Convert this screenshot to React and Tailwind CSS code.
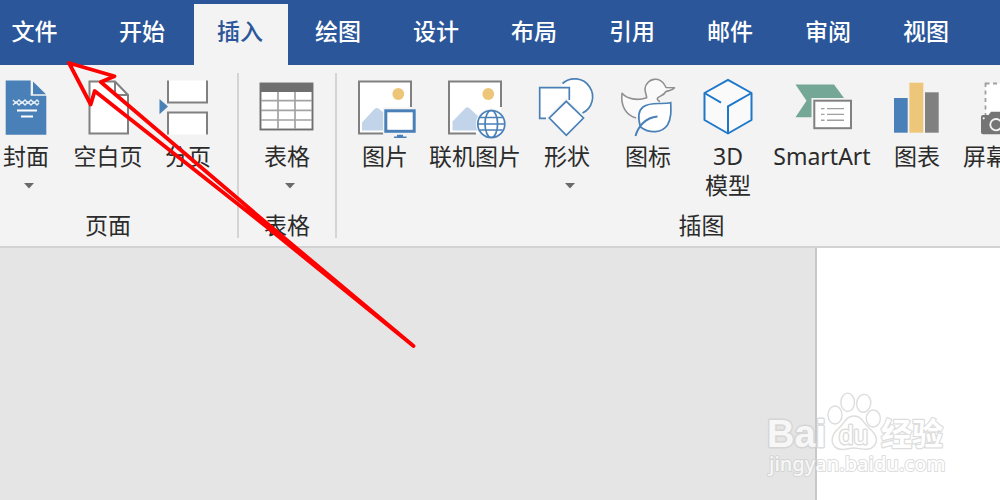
const tabs = ["开始", "插入", "绘图", "设计", "布局", "引用", "邮件", "审阅", "视图"];

const Icon = ({ children }) => (
  <svg
    className="w-[60px] h-[60px] shrink-0 overflow-visible"
    viewBox="0 0 60 60"
    fill="none"
    aria-hidden="true"
  >
    {children}
  </svg>
);

const CoverIcon = () => (
  <Icon>
    <path d="M9.700 3.500H34.700V18.700H50.300V57.700H9.700Z" fill="#4a80b8" />
    <path d="M37 4.500L50 17.200H37Z" fill="#4a80b8" />
    <path
      d="M17 23l3 3 3-3 3 3 3-3 3 3 3-3 3 3 3-3 2 2M17 28l3-3 3 3 3-3 3 3 3-3 3 3 3-3 3 3 2-2"
      stroke="#e6eff7"
      strokeWidth="1.400"
    />
    <path d="M21 33.500H41M25 39.500H37" stroke="#fff" strokeWidth="2" />
  </Icon>
);

const BlankPageIcon = () => (
  <Icon>
    <path d="M11.500 4.500H37L50 18V56.500H11.500Z" fill="#fff" stroke="#808080" strokeWidth="2" />
    <path d="M37 4.500V18H50" stroke="#808080" strokeWidth="2" />
  </Icon>
);

const PageBreakIcon = () => (
  <Icon>
    <path d="M10 3.500V25.500H49V3.500" fill="#fff" stroke="#808080" strokeWidth="2" />
    <path d="M10 57.500V35.500H49V57.500" fill="#fff" stroke="#808080" strokeWidth="2" />
    <path d="M1.500 22L10 29.600L1.500 37.200Z" fill="#4a80b8" />
  </Icon>
);

const TableIcon = () => (
  <Icon>
    <rect x="3.500" y="6.500" width="52" height="46" fill="#fff" stroke="#6f6f6f" strokeWidth="1.900" />
    <rect x="3" y="6" width="53" height="9" fill="#6f6f6f" />
    <path d="M21 15V52M38 15V52M4 23.700H55M4 33.400H55M4 43H55" stroke="#a3a3a3" strokeWidth="1.700" />
  </Icon>
);

const PictureIcon = () => (
  <Icon>
    <rect x="4" y="4.500" width="52" height="52" fill="#fff" />
    <path d="M56 30V4.500H4V56.500H28.500" stroke="#808080" strokeWidth="2" />
    <circle cx="43.300" cy="17" r="5.900" fill="#eec67a" />
    <path d="M7 53.500V45.500L19.500 32Q21.500 30.300 23.500 31.500L28.500 35.500V53.500Z" fill="#c2d4e9" />
    <rect x="28" y="30.500" width="34" height="27" fill="#f3f3f3" />
    <rect x="30.800" y="33.800" width="28.400" height="20.500" fill="#fff" stroke="#4a80b8" strokeWidth="3" />
    <path d="M42 57.700H48V59.500H51.500V61H39V59.500H42Z" fill="#4a80b8" />
  </Icon>
);

const OnlinePictureIcon = () => (
  <Icon>
    <rect x="4" y="4.500" width="52" height="52" fill="#fff" />
    <path d="M56 30V4.500H4V56.500H31" stroke="#808080" strokeWidth="2" />
    <circle cx="43.300" cy="17" r="5.900" fill="#eec67a" />
    <path d="M7.500 53.500V44.500L20.500 31Q22.300 29.500 24.200 31L34 40V53.500Z" fill="#c2d4e9" />
    <circle cx="46.300" cy="47" r="15.500" fill="#f3f3f3" />
    <circle cx="46.300" cy="47" r="13.500" fill="#fff" stroke="#4a80b8" strokeWidth="1.700" />
    <ellipse cx="46.300" cy="47" rx="6.300" ry="13.500" stroke="#4a80b8" strokeWidth="1.700" />
    <path d="M32.800 47H59.800M35 40.500H57.600M35 53H57.600" stroke="#4a80b8" strokeWidth="1.700" />
  </Icon>
);

const ShapesIcon = () => (
  <Icon>
    <circle cx="38.500" cy="20" r="18" fill="#fff" />
    <path d="M25.500 6.500A18 18 0 1 1 45.500 36" stroke="#4a80b8" strokeWidth="1.700" />
    <rect x="2.700" y="10.500" width="31" height="31" fill="#fff" />
    <path d="M32.300 23V10.700H2.700V41.300H9" stroke="#4a80b8" strokeWidth="1.700" />
    <path d="M29.300 21L49.500 41L29.300 61L9.300 41Z" fill="#f3f3f3" />
    <path d="M29.300 24.300L46.500 41L29.300 58.300L12.300 41Z" fill="#fff" stroke="#4a80b8" strokeWidth="1.700" />
  </Icon>
);

const DuckIcon = () => (
  <Icon>
    <path
      d="M18 41C8 38 2.500 29 4 16.300C9 22 19 24 28.700 20.800C28.500 18 27 16 27 11.500A10.500 10.500 0 0 1 47 8.500L48 10.500L56.500 10.700C54 14 51 13.500 48 14.500C45 20 39 19 39.300 22C39.500 24 42 23.500 41.300 25"
      fill="#fafafa"
      stroke="#909090"
      strokeWidth="1.600"
      strokeLinejoin="round"
    />
    <path
      d="M52.700 25.700C44 28 33 24 25 30C20 34 20 42 22.500 50C32 57 44 56 49.500 48C53.500 41 53 34 52.700 25.700Z"
      fill="#fff"
      stroke="#4a80b8"
      strokeWidth="1.700"
    />
    <path d="M17.500 59C20 50 27 40.500 39.500 39.500" stroke="#4a80b8" strokeWidth="2" />
  </Icon>
);

const CubeIcon = () => (
  <Icon>
    <path
      d="M30 2.800L53.500 16V43L30 56.500L6.500 43V16Z"
      fill="#fafafa"
      stroke="#1d78c9"
      strokeWidth="2"
      strokeLinejoin="round"
    />
    <path d="M53.500 16L30 29.300V56.500M6.500 16L23 25.700" stroke="#1d78c9" strokeWidth="2" />
  </Icon>
);

const SmartArtIcon = () => (
  <Icon>
    <path d="M3.500 7.500H42L52 21H20V40.200H3.500L14.500 23.700Z" fill="#74a795" />
    <rect x="19.500" y="21" width="42" height="33" fill="#f3f3f3" />
    <rect x="22.300" y="23.700" width="36.700" height="27.500" fill="#fff" stroke="#808080" strokeWidth="2" />
    <path
      d="M29 31.600H32.500M35 31.600H52M29 37.400H32.500M35 37.400H52M29 43.300H32.500M35 43.300H52"
      stroke="#a0a0a0"
      strokeWidth="1.400"
    />
  </Icon>
);

const ChartIcon = () => (
  <Icon>
    <rect x="7" y="21" width="13.700" height="34.700" fill="#4a80b8" />
    <rect x="22.400" y="5.700" width="13.900" height="50" fill="#eec67a" />
    <rect x="38" y="15.300" width="13.700" height="40.400" fill="#808080" />
  </Icon>
);

const ScreenshotIcon = () => (
  <Icon>
    <rect x="6.500" y="6.500" width="48" height="40" fill="#fff" stroke="#a0a0a0" strokeWidth="1.800" strokeDasharray="4 3.500" />
    <path d="M4 38H9.500L12 34.700H22L24.500 38H31Q33 38 33 40V57.300H4Q2 57.300 2 55.500V40Q2 38 4 38Z" fill="#757575" />
    <circle cx="17" cy="47.700" r="5.700" stroke="#f3f3f3" strokeWidth="1.800" />
    <circle cx="4.700" cy="41.300" r="1.100" fill="#f3f3f3" />
  </Icon>
);

const RibbonButton = ({ icon, label, second, dropdown, className }) => (
  <button
    className={`flex flex-col items-center shrink-0 leading-[29px] whitespace-nowrap ${className}`}
  >
    {icon}
    <span className="mt-[5px]">{label}</span>
    {second && <span>{second}</span>}
    {dropdown && (
      <svg className="w-4 h-[29px] ml-1.5" viewBox="0 0 16 29" aria-hidden="true">
        <path d="M3 12H13L8 17.500Z" fill="#6a6a6a" />
      </svg>
    )}
  </button>
);

const RibbonGroup = ({ title, children, className, rowClass }) => (
  <section
    className={`h-[165px] pt-1 pb-px flex flex-col justify-between shrink-0 border-[#d4d4d4] ${className}`}
  >
    <div className={`flex items-start gap-4 ${rowClass}`}>{children}</div>
    <h2 className="text-center leading-6">{title}</h2>
  </section>
);

const Watermark = () => (
  <svg
    className="absolute right-[50px] bottom-5 w-[190px] h-[90px] pointer-events-none opacity-70"
    viewBox="0 0 190 90"
    fill="#fff"
    stroke="#cfcfcf"
    strokeWidth="1.400"
    strokeLinejoin="round"
  >
    <ellipse cx="75" cy="25" rx="7" ry="9" />
    <ellipse cx="87.700" cy="12.300" rx="6.800" ry="9.200" />
    <ellipse cx="103.700" cy="13.300" rx="7" ry="9" transform="rotate(8 103.700 13.300)" />
    <ellipse cx="113.300" cy="28.500" rx="7" ry="8.500" />
    <path d="M94 26C102 26 103 33 109 38C116 44 119 50 114 56C109 62 100 58 94 58C88 58 80 62 75 57C70 52 72 44 78 39C85 33 86 26 94 26Z" />
    <g fontFamily="Liberation Sans, sans-serif" strokeWidth="3" paintOrder="stroke">
      <text x="7" y="57" fontSize="38" fontWeight="700">Bai</text>
      <text x="79" y="54" fontSize="26">du</text>
    </g>
    <text x="121" y="55" fontSize="31" fontWeight="700" strokeWidth="2.500" paintOrder="stroke" fontFamily="Noto Sans CJK SC, sans-serif">经验</text>
    <text x="9" y="81" fontSize="20" fontWeight="500" strokeWidth="2" paintOrder="stroke" fontFamily="Noto Sans, sans-serif">jingyan.baidu.com</text>
  </svg>
);

const App = () => {
  return (
    <div className="relative min-h-screen flex flex-col overflow-hidden bg-[#e5e5e5] text-[23px] text-[#2b2b2b] font-['Noto_Sans','Noto_Sans_CJK_SC',sans-serif]">
      {/* Tabs */}
      <nav className="h-[65px] pt-1 flex gap-1 bg-[#2b579a] text-white font-medium">
        <button className="w-[92px] pr-[23px] shrink-0 pb-1.5">文件</button>
        {tabs.map((tab) => (
          <button
            key={tab}
            className={`w-[94px] pr-0.5 shrink-0 pb-1.5 ${tab === "插入" ? "bg-[#f3f3f3] text-[#2b579a]" : ""}`}
          >
            {tab}
          </button>
        ))}
      </nav>

      {/* Ribbon */}
      <div className="py-2 flex bg-[#f3f3f3] border-b-2 border-[#d2d2d2] overflow-hidden">
        <RibbonGroup title="页面" className="w-[239px] pr-[21px] border-r-2">
          <RibbonButton icon={<CoverIcon />} label="封面" dropdown className="w-[52px]" />
          <RibbonButton icon={<BlankPageIcon />} label="空白页" className="w-[80px]" />
          <RibbonButton icon={<PageBreakIcon />} label="分页" className="w-[48px]" />
        </RibbonGroup>
        <RibbonGroup title="表格" className="w-[98px] border-r-2" rowClass="justify-center">
          <RibbonButton icon={<TableIcon />} label="表格" dropdown className="w-[60px]" />
        </RibbonGroup>
        <RibbonGroup title="插图" className="w-[729px]" rowClass="pl-5">
          <RibbonButton icon={<PictureIcon />} label="图片" className="w-[56px]" />
          <RibbonButton icon={<OnlinePictureIcon />} label="联机图片" className="w-[92px]" />
          <RibbonButton icon={<ShapesIcon />} label="形状" dropdown className="w-[60px]" />
          <RibbonButton icon={<DuckIcon />} label="图标" className="w-[70px]" />
          <RibbonButton icon={<CubeIcon />} label="3D" second="模型" className="w-[58px]" />
          <RibbonButton icon={<SmartArtIcon />} label="SmartArt" className="w-[98px]" />
          <RibbonButton icon={<ChartIcon />} label="图表" className="w-[60px]" />
          <RibbonButton icon={<ScreenshotIcon />} label="屏幕截图" className="w-[92px]" />
        </RibbonGroup>
      </div>

      {/* Document */}
      <main className="flex-1 flex justify-end">
        <div className="w-[185px] bg-white border-l-2 border-[#c8c8c8]" />
      </main>

      <Watermark />

      {/* Arrow pointing at the file tab */}
      <svg
        className="absolute left-0 top-0 w-[420px] h-[350px] pointer-events-none"
        viewBox="0 0 420 350"
        fill="none"
        stroke="#ff0000"
        strokeWidth="3.800"
        strokeLinejoin="round"
      >
        <path d="M69 63L114.500 76.300L100.800 82L270 226L413.500 346L265 225.500L94.700 91L90.700 104.500Z" />
      </svg>
    </div>
  );
};

export default App;
